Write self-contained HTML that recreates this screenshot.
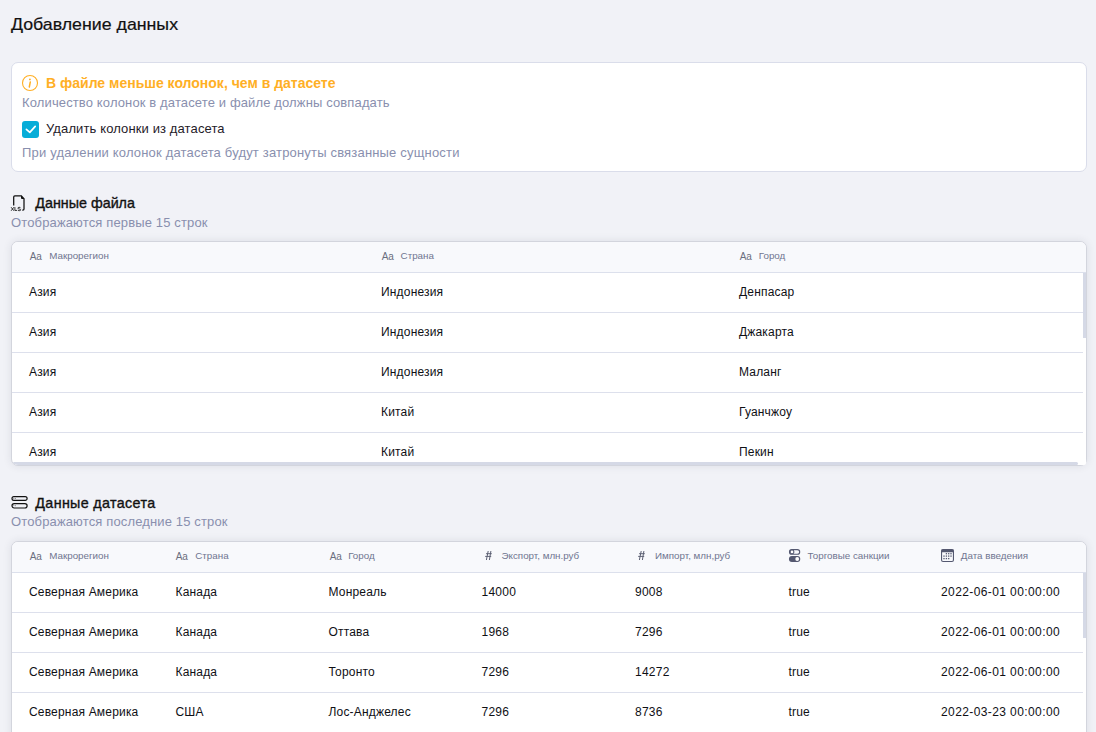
<!DOCTYPE html>
<html><head><meta charset="utf-8">
<style>
*{box-sizing:border-box;margin:0;padding:0}
html,body{width:1096px;height:732px;overflow:hidden;background:#F1F2F7;font-family:"Liberation Sans",sans-serif;color:#1b1c22}
.t{position:absolute;white-space:nowrap;line-height:1}
.card{position:absolute;background:#fff;border:1px solid #DADDEA;border-radius:7px}
.gray{color:#898FAE}
.tbl{position:absolute;left:11px;width:1076px;background:#fff;border:1px solid #D3D5DD;border-radius:7px;overflow:hidden;box-shadow:0 0 8px rgba(40,45,70,.10)}
.hdr{position:absolute;left:0;top:0;right:0;height:31px;background:#F8F9FC;border-bottom:1px solid #DCE0EC}
.line{position:absolute;left:0;width:1071px;height:1px;background:#DDE0EC}
.vs{position:absolute;right:0;width:3px;background:#D5D9E6}
.hs{position:absolute;left:0;bottom:0;height:3px;background:#D5D9E6;border-radius:2px}
.h{font-size:9.8px;color:#6F7590}
.aa{font-size:10px;color:#6A6E7E}
.c{font-size:12px;color:#0f1015}
.sb{-webkit-text-stroke:.35px #111;color:#111}
</style></head><body>
<div class="t " style="left:11.4px;top:17.25px;font-size:16.6px;color:#111;-webkit-text-stroke:.2px #111;transform:scaleX(1.07);transform-origin:0 0">Добавление данных</div>
<div class="card" style="left:11px;top:62px;width:1076px;height:110px"></div>
<svg style="position:absolute;left:21px;top:74px" width="18" height="18" viewBox="0 0 18 18"><circle cx="9" cy="9" r="7.5" fill="none" stroke="#FFAF25" stroke-width="1.1"/><circle cx="8.9" cy="5.4" r=".95" fill="#FFAF25"/><path d="M9.3 7.9 L8.3 13" stroke="#FFAF25" stroke-width="1.5" stroke-linecap="round"/></svg>
<div class="t " style="left:46px;top:76.15px;font-size:14px;font-weight:700;color:#FFAF25">В файле меньше колонок, чем в датасете</div>
<div class="t gray" style="left:22px;top:95.70px;font-size:13px;letter-spacing:.13px">Количество колонок в датасете и файле должны совпадать</div>
<svg style="position:absolute;left:22px;top:121px" width="17" height="17" viewBox="0 0 17 17"><rect x="0" y="0" width="17" height="17" rx="3" fill="#07ADD8"/><path d="M4.4 8.4 L7.8 11.4 L13.2 5.4" fill="none" stroke="#fff" stroke-width="1.7" stroke-linecap="round" stroke-linejoin="round"/></svg>
<div class="t " style="left:46px;top:121.50px;font-size:13px;letter-spacing:.12px;color:#1f2029">Удалить колонки из датасета</div>
<div class="t gray" style="left:22px;top:145.80px;font-size:13px;letter-spacing:.18px">При удалении колонок датасета будут затронуты связанные сущности</div>
<svg style="position:absolute;left:10px;top:194px" width="18" height="18" viewBox="0 0 18 18"><path d="M3.7 11.6 V3 Q3.7 1.8 4.9 1.8 H11.3 L14 4.8 V14.9 Q14 16 12.9 16 H12.3" fill="none" stroke="#111" stroke-width="1.25"/><path d="M11 1.5 L14.3 5.1 H12 Q11 5.1 11 4.1 Z" fill="#111"/><g fill="none" stroke="#111" stroke-width=".85"><path d="M1.1 13.2 L3.9 16.8 M3.9 13.2 L1.1 16.8"/><path d="M4.9 13.1 V16.4 H7"/><path d="M10.6 14.1 Q10.3 13.3 9.2 13.3 Q7.9 13.3 7.9 14.2 Q7.9 14.9 9.2 15 Q10.7 15.1 10.7 15.9 Q10.7 16.7 9.2 16.7 Q8 16.7 7.6 15.9"/></g></svg>
<div class="t sb" style="left:35.3px;top:195.70px;font-size:14.3px;">Данные файла</div>
<div class="t gray" style="left:11px;top:215.90px;font-size:13px;letter-spacing:.14px">Отображаются первые 15 строк</div>
<div class="tbl" style="top:241px;height:225px">
  <div class="hdr"></div>
  <div class="line" style="top:70px"></div>
  <div class="line" style="top:110px"></div>
  <div class="line" style="top:150px"></div>
  <div class="line" style="top:190px"></div>
  <div class="vs" style="top:31px;height:65px"></div>
  <div class="hs" style="width:1066px"></div>
</div>
<div style="position:absolute;left:1079px;top:459px;width:7px;height:6px;background:#fff;border-radius:0 0 2px 0"></div>
<div class="t aa" style="left:29.7px;top:251.73px;font-size:10px;">Aa</div>
<div class="t h" style="left:49.2px;top:251.20px;font-size:9.8px;">Макрорегион</div>
<div class="t aa" style="left:381.7px;top:251.73px;font-size:10px;">Aa</div>
<div class="t h" style="left:400.6px;top:251.20px;font-size:9.8px;">Страна</div>
<div class="t aa" style="left:739.7px;top:251.73px;font-size:10px;">Aa</div>
<div class="t h" style="left:758.8px;top:251.20px;font-size:9.8px;">Город</div>
<div class="t c" style="left:29px;top:285.54px;font-size:12px;letter-spacing:.18px">Азия</div>
<div class="t c" style="left:381px;top:285.54px;font-size:12px;letter-spacing:.18px">Индонезия</div>
<div class="t c" style="left:739px;top:285.54px;font-size:12px;letter-spacing:.18px">Денпасар</div>
<div class="t c" style="left:29px;top:325.54px;font-size:12px;letter-spacing:.18px">Азия</div>
<div class="t c" style="left:381px;top:325.54px;font-size:12px;letter-spacing:.18px">Индонезия</div>
<div class="t c" style="left:739px;top:325.54px;font-size:12px;letter-spacing:.18px">Джакарта</div>
<div class="t c" style="left:29px;top:365.54px;font-size:12px;letter-spacing:.18px">Азия</div>
<div class="t c" style="left:381px;top:365.54px;font-size:12px;letter-spacing:.18px">Индонезия</div>
<div class="t c" style="left:739px;top:365.54px;font-size:12px;letter-spacing:.18px">Маланг</div>
<div class="t c" style="left:29px;top:405.54px;font-size:12px;letter-spacing:.18px">Азия</div>
<div class="t c" style="left:381px;top:405.54px;font-size:12px;letter-spacing:.18px">Китай</div>
<div class="t c" style="left:739px;top:405.54px;font-size:12px;letter-spacing:.18px">Гуанчжоу</div>
<div class="t c" style="left:29px;top:445.54px;font-size:12px;letter-spacing:.18px">Азия</div>
<div class="t c" style="left:381px;top:445.54px;font-size:12px;letter-spacing:.18px">Китай</div>
<div class="t c" style="left:739px;top:445.54px;font-size:12px;letter-spacing:.18px">Пекин</div>
<svg style="position:absolute;left:10px;top:494px" width="19" height="16" viewBox="0 0 19 16"><rect x="2" y="2.6" width="15.1" height="3.8" rx="1.9" fill="none" stroke="#111" stroke-width="1.2"/><rect x="2" y="9.6" width="15.1" height="4.4" rx="2.2" fill="none" stroke="#111" stroke-width="1.2"/><g fill="#333"><circle cx="3.9" cy="4.5" r=".45"/><circle cx="5.3" cy="4.5" r=".45"/><circle cx="3.9" cy="11.8" r=".45"/><circle cx="5.3" cy="11.8" r=".45"/></g></svg>
<div class="t sb" style="left:35.3px;top:495.90px;font-size:14.3px;letter-spacing:.35px">Данные датасета</div>
<div class="t gray" style="left:11px;top:514.90px;font-size:13px;letter-spacing:.14px">Отображаются последние 15 строк</div>
<div class="tbl" style="top:541px;height:200px">
  <div class="hdr"></div>
  <div class="line" style="top:70px"></div>
  <div class="line" style="top:110px"></div>
  <div class="line" style="top:150px"></div>
  <div class="vs" style="top:31px;height:65px"></div>
</div>
<div class="t aa" style="left:29.7px;top:551.63px;font-size:10px;">Aa</div>
<div class="t h" style="left:49.2px;top:551.10px;font-size:9.8px;">Макрорегион</div>
<div class="t aa" style="left:175.7px;top:551.63px;font-size:10px;">Aa</div>
<div class="t h" style="left:195.3px;top:551.10px;font-size:9.8px;">Страна</div>
<div class="t aa" style="left:329.7px;top:551.63px;font-size:10px;">Aa</div>
<div class="t h" style="left:348.2px;top:551.10px;font-size:9.8px;">Город</div>
<svg style="position:absolute;left:484px;top:550px" width="10" height="12" viewBox="0 0 10 12"><path d="M4.2 1 L2.4 10 M6.9 1 L5.4 10 M2.1 3.7 H7.8 M1.2 6.4 H7.2" stroke="#5E6275" stroke-width="1" fill="none"/></svg>
<div class="t h" style="left:501.5px;top:551.10px;font-size:9.8px;">Экспорт, млн.руб</div>
<svg style="position:absolute;left:637px;top:550px" width="10" height="12" viewBox="0 0 10 12"><path d="M4.2 1 L2.4 10 M6.9 1 L5.4 10 M2.1 3.7 H7.8 M1.2 6.4 H7.2" stroke="#5E6275" stroke-width="1" fill="none"/></svg>
<div class="t h" style="left:655px;top:551.10px;font-size:9.8px;">Импорт, млн,руб</div>
<svg style="position:absolute;left:788px;top:548px" width="13" height="15" viewBox="0 0 13 15"><rect x="1.5" y="1.6" width="10.2" height="4.6" rx="2.3" fill="none" stroke="#545870" stroke-width="1.1"/><circle cx="4" cy="3.9" r="1.9" fill="#fff" stroke="#545870" stroke-width="1.1"/><rect x=".95" y="8.1" width="11.3" height="5.8" rx="2.9" fill="#545870"/><circle cx="9.2" cy="11" r="1.9" fill="#fff"/></svg>
<div class="t h" style="left:807.6px;top:551.10px;font-size:9.8px;">Торговые санкции</div>
<svg style="position:absolute;left:941px;top:549px" width="13" height="13" viewBox="0 0 13 13"><rect x=".55" y=".55" width="11.9" height="11.9" rx="1.5" fill="none" stroke="#545870" stroke-width="1.1"/><rect x=".55" y=".55" width="11.9" height="2.7" fill="#545870"/><g fill="#545870"><rect x="4.75" y="4.05" width="1.3" height="1.3"/><rect x="7.05" y="4.05" width="1.3" height="1.3"/><rect x="9.35" y="4.05" width="1.3" height="1.3"/><rect x="2.35" y="6.45" width="1.3" height="1.3"/><rect x="4.75" y="6.45" width="1.3" height="1.3"/><rect x="7.05" y="6.45" width="1.3" height="1.3"/><rect x="9.35" y="6.45" width="1.3" height="1.3"/><rect x="2.35" y="8.95" width="1.3" height="1.3"/><rect x="4.75" y="8.95" width="1.3" height="1.3"/><rect x="7.05" y="8.95" width="1.3" height="1.3"/></g></svg>
<div class="t h" style="left:960.8px;top:551.10px;font-size:9.8px;">Дата введения</div>
<div class="t c" style="left:29px;top:585.64px;font-size:12px;letter-spacing:.18px">Северная Америка</div>
<div class="t c" style="left:175.5px;top:585.64px;font-size:12px;letter-spacing:.18px">Канада</div>
<div class="t c" style="left:328.5px;top:585.64px;font-size:12px;letter-spacing:.18px">Монреаль</div>
<div class="t c" style="left:481.5px;top:585.64px;font-size:12px;letter-spacing:.25px">14000</div>
<div class="t c" style="left:635px;top:585.64px;font-size:12px;letter-spacing:.25px">9008</div>
<div class="t c" style="left:788.5px;top:585.64px;font-size:12px;letter-spacing:.18px">true</div>
<div class="t c" style="left:941px;top:585.64px;font-size:12px;letter-spacing:.4px">2022-06-01 00:00:00</div>
<div class="t c" style="left:29px;top:625.64px;font-size:12px;letter-spacing:.18px">Северная Америка</div>
<div class="t c" style="left:175.5px;top:625.64px;font-size:12px;letter-spacing:.18px">Канада</div>
<div class="t c" style="left:328.5px;top:625.64px;font-size:12px;letter-spacing:.18px">Оттава</div>
<div class="t c" style="left:481.5px;top:625.64px;font-size:12px;letter-spacing:.25px">1968</div>
<div class="t c" style="left:635px;top:625.64px;font-size:12px;letter-spacing:.25px">7296</div>
<div class="t c" style="left:788.5px;top:625.64px;font-size:12px;letter-spacing:.18px">true</div>
<div class="t c" style="left:941px;top:625.64px;font-size:12px;letter-spacing:.4px">2022-06-01 00:00:00</div>
<div class="t c" style="left:29px;top:665.64px;font-size:12px;letter-spacing:.18px">Северная Америка</div>
<div class="t c" style="left:175.5px;top:665.64px;font-size:12px;letter-spacing:.18px">Канада</div>
<div class="t c" style="left:328.5px;top:665.64px;font-size:12px;letter-spacing:.18px">Торонто</div>
<div class="t c" style="left:481.5px;top:665.64px;font-size:12px;letter-spacing:.25px">7296</div>
<div class="t c" style="left:635px;top:665.64px;font-size:12px;letter-spacing:.25px">14272</div>
<div class="t c" style="left:788.5px;top:665.64px;font-size:12px;letter-spacing:.18px">true</div>
<div class="t c" style="left:941px;top:665.64px;font-size:12px;letter-spacing:.4px">2022-06-01 00:00:00</div>
<div class="t c" style="left:29px;top:705.64px;font-size:12px;letter-spacing:.18px">Северная Америка</div>
<div class="t c" style="left:175.5px;top:705.64px;font-size:12px;letter-spacing:.18px">США</div>
<div class="t c" style="left:328.5px;top:705.64px;font-size:12px;letter-spacing:.18px">Лос-Анджелес</div>
<div class="t c" style="left:481.5px;top:705.64px;font-size:12px;letter-spacing:.25px">7296</div>
<div class="t c" style="left:635px;top:705.64px;font-size:12px;letter-spacing:.25px">8736</div>
<div class="t c" style="left:788.5px;top:705.64px;font-size:12px;letter-spacing:.18px">true</div>
<div class="t c" style="left:941px;top:705.64px;font-size:12px;letter-spacing:.4px">2022-03-23 00:00:00</div>
</body></html>
